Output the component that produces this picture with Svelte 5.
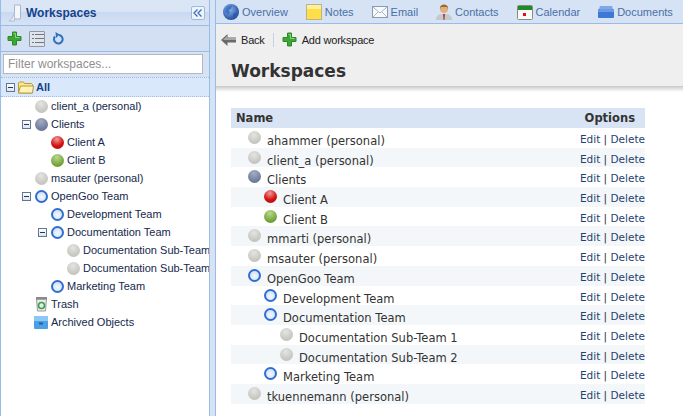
<script>
  const tree = [
    { label: 'client_a (personal)', depth: 1, dot: 'grey' },
    { label: 'Clients', depth: 1, dot: 'slate', open: true },
    { label: 'Client A', depth: 2, dot: 'red' },
    { label: 'Client B', depth: 2, dot: 'green' },
    { label: 'msauter (personal)', depth: 1, dot: 'grey' },
    { label: 'OpenGoo Team', depth: 1, dot: 'ring', open: true },
    { label: 'Development Team', depth: 2, dot: 'ring' },
    { label: 'Documentation Team', depth: 2, dot: 'ring', open: true },
    { label: 'Documentation Sub-Team 1', depth: 3, dot: 'grey' },
    { label: 'Documentation Sub-Team 2', depth: 3, dot: 'grey' },
    { label: 'Marketing Team', depth: 2, dot: 'ring' }
  ];

  const rows = [
    { label: 'ahammer (personal)', depth: 0, dot: 'grey' },
    { label: 'client_a (personal)', depth: 0, dot: 'grey' },
    { label: 'Clients', depth: 0, dot: 'slate' },
    { label: 'Client A', depth: 1, dot: 'red' },
    { label: 'Client B', depth: 1, dot: 'green' },
    { label: 'mmarti (personal)', depth: 0, dot: 'grey' },
    { label: 'msauter (personal)', depth: 0, dot: 'grey' },
    { label: 'OpenGoo Team', depth: 0, dot: 'ring' },
    { label: 'Development Team', depth: 1, dot: 'ring' },
    { label: 'Documentation Team', depth: 1, dot: 'ring' },
    { label: 'Documentation Sub-Team 1', depth: 2, dot: 'grey' },
    { label: 'Documentation Sub-Team 2', depth: 2, dot: 'grey' },
    { label: 'Marketing Team', depth: 1, dot: 'ring' },
    { label: 'tkuennemann (personal)', depth: 0, dot: 'grey' }
  ];

  const tabs = ['Overview', 'Notes', 'Email', 'Contacts', 'Calendar', 'Documents'];
</script>

{#snippet minus()}
  <span class="minus"></span>
{/snippet}

{#snippet plus()}
  <svg width="15" height="15" viewBox="0 0 15 15">
    <path d="M5.500 1h4v4.500h4.500v4h-4.500v4.500h-4v-4.500h-4.500v-4h4.500z" fill="#3fa535" stroke="#2a8a2a" stroke-linejoin="round"/>
    <path d="M6.500 2.500h2v4h4" fill="none" stroke="#86d877"/>
  </svg>
{/snippet}

{#snippet tabIcon(name)}
  {#if name === 'Overview'}
    <svg width="16" height="16" viewBox="0 0 16 16">
      <defs>
        <radialGradient id="globe" cx="0.4" cy="0.35" r="0.7">
          <stop offset="0" stop-color="#8fb6ec"/>
          <stop offset="1" stop-color="#1d4796"/>
        </radialGradient>
      </defs>
      <circle cx="8" cy="8" r="8" fill="url(#globe)"/>
      <path d="M3 4c2-2 4-3 6-2l-1 3-2 1 1 3-2 2-3-3z" fill="#3f76c6"/>
      <path d="M10 10l4-2-1 4-3 2z" fill="#2a5bb0"/>
    </svg>
  {:else if name === 'Notes'}
    <svg width="16" height="16" viewBox="0 0 16 16">
      <rect x="0.500" y="0.500" width="15" height="15" fill="#ffdf45" stroke="#bdb38a"/>
      <rect x="1" y="1" width="14" height="4" fill="#fff09a"/>
    </svg>
  {:else if name === 'Email'}
    <svg width="16" height="12" viewBox="0 0 16 12">
      <rect x="0.500" y="0.500" width="15" height="11" fill="#f7f9fc" stroke="#8d9bb0"/>
      <path d="M1 1l7 6 7-6M1 11l5-5M15 11l-5-5" fill="none" stroke="#aab6c6"/>
    </svg>
  {:else if name === 'Contacts'}
    <svg width="16" height="16" viewBox="0 0 16 16">
      <circle cx="8" cy="5" r="4" fill="#e0b080"/>
      <path d="M4 5c-1-6 9-6 8 0l-1-2H5z" fill="#9a6a2e"/>
      <path d="M0 16c0-5 3-6 8-6s8 1 8 6z" fill="#c4c8d0"/>
      <path d="M7 10h2l-.5 6h-1z" fill="#c0392b"/>
    </svg>
  {:else if name === 'Calendar'}
    <svg width="16" height="16" viewBox="0 0 16 16">
      <rect x="0.500" y="1.500" width="15" height="14" rx="1" fill="#fafafa" stroke="#8a8a7a"/>
      <rect x="1" y="2" width="14" height="4" fill="#1f8a2a"/>
      <rect x="6" y="9" width="3" height="3" fill="#d11"/>
    </svg>
  {:else}
    <svg width="16" height="12" viewBox="0 0 16 12">
      <path d="M2 0h12l1 3H1z" fill="#7fa9e6"/>
      <rect x="0" y="3" width="16" height="9" rx="1" fill="#3f78d4"/>
      <rect x="0" y="3" width="16" height="3" fill="#6a9ae6"/>
    </svg>
  {/if}
{/snippet}

<div class="page">
  <aside class="side">
    <header class="side-title">
      <svg width="14" height="18" viewBox="0 0 14 18">
        <path d="M6.500 1h6v14h-6z" fill="#f4f6fa" stroke="#a9b6c8"/>
        <path d="M1 17c2-1 4-4 5.500-8v8z" fill="#e6ebf2" stroke="#b5c0cf"/>
      </svg>
      <b>Workspaces</b>
      <span class="collapse">
        <svg width="10" height="8" viewBox="0 0 10 8">
          <path d="M4.500 0.500L1 4l3.500 3.500M8.500 0.500L5 4l3.500 3.500" fill="none" stroke="#3f6fb0" stroke-width="1.300"/>
        </svg>
      </span>
    </header>

    <div class="side-tools">
      {@render plus()}
      <span class="list-btn">
        <svg width="13" height="11" viewBox="0 0 13 11">
          <path d="M4 1.500h9M4 5.500h9M4 9.500h9M1 1.500h2M1 5.500h2M1 9.500h2" stroke="#6f7680"/>
        </svg>
      </span>
      <svg width="12" height="13" viewBox="0 0 12 13">
        <path d="M3 4.500a4.300 4.300 0 1 0 4-1.500" fill="none" stroke="#2f6fc0" stroke-width="2"/>
        <path d="M3.500 0l.5 6 3.500-3.500z" fill="#2f6fc0"/>
      </svg>
    </div>

    <div class="filter"><input placeholder="Filter workspaces..." /></div>

    <div class="tree">
      <div class="node all">
        {@render minus()}
        <svg class="folder" width="16" height="13" viewBox="0 0 16 13">
          <path d="M.5 12V2l1-1h4l1 1.500h7l1 1V12z" fill="#ffe88a" stroke="#b89a3a"/>
          <path d="M.5 12l2-7h13l-1 7z" fill="#fff3b8" stroke="#b89a3a"/>
        </svg>
        <b>All</b>
      </div>
      {#each tree as n}
        <div class="node" style="padding-left: {n.depth * 16 + 3}px">
          {#if n.open}{@render minus()}{:else}<span class="gap"></span>{/if}
          <span class="dot {n.dot}"></span>
          <span class="name">{n.label}</span>
        </div>
      {/each}
      <div class="node" style="padding-left: 19px">
        <span class="gap"></span>
        <svg class="tail" width="13" height="16" viewBox="0 0 13 16">
          <path d="M1.500 3h10l-1 12h-8z" fill="#eaeaea" stroke="#9a9a9a"/>
          <rect x="1" y="1" width="11" height="2.500" fill="#8a8a8a"/>
          <circle cx="6.500" cy="9.500" r="3" fill="none" stroke="#3aa04a" stroke-width="1.600"/>
        </svg>
        <span class="name">Trash</span>
      </div>
      <div class="node" style="padding-left: 18px">
        <span class="gap"></span>
        <svg class="tail" width="14" height="13" viewBox="0 0 14 13">
          <rect width="14" height="13" rx="1" fill="#4a9fe6"/>
          <rect width="14" height="5" fill="#8cc8f5"/>
          <rect x="5" y="6.500" width="4" height="2" fill="#1f5f9f"/>
        </svg>
        <span class="name">Archived Objects</span>
      </div>
    </div>
  </aside>

  <main class="main">
    <nav class="tabs">
      {#each tabs as t}
        <span class="tab">{@render tabIcon(t)}{t}</span>
      {/each}
    </nav>

    <div class="head">
      <div class="actions">
        <span class="act">
          <svg width="15" height="12" viewBox="0 0 15 12">
            <path d="M6.500 0v3.500H15v5H6.500V12L0 6z" fill="#6a6a6a"/>
            <path d="M6 2L2 6h13V4H6z" fill="#a8a8a8"/>
          </svg>
          Back
        </span>
        <span class="sep"></span>
        <span class="act">{@render plus()} Add workspace</span>
      </div>
      <h1>Workspaces</h1>
    </div>
    <div class="shadow"></div>

    <div class="table">
      <div class="thead"><span>Name</span><span>Options</span></div>
      {#each rows as r, i}
        <div class="row" class:odd={i % 2 === 1}>
          <span class="cell" style="padding-left: {r.depth * 16 + 17}px">
            <span class="dot {r.dot}"></span>
            <span class="label">{r.label}</span>
          </span>
          <span class="opts"><a href="#e">Edit</a> | <a href="#d">Delete</a></span>
        </div>
      {/each}
    </div>
  </main>
</div>

<style>
  :global(body) {
    margin: 0;
    overflow: hidden;
  }
  .page {
    display: flex;
    width: 683px;
    height: 416px;
    overflow: hidden;
    background: #d6e3f5;
    font-family: "Liberation Sans", Arial, sans-serif;
    font-size: 11px;
    color: #15284b;
  }

  .side {
    width: 208px;
    height: 416px;
    flex: none;
    overflow: hidden;
    border: 1px solid #99bbe8;
    border-top: 0;
    border-bottom: 0;
    background: #fff;
  }
  .side-title {
    display: flex;
    align-items: center;
    gap: 4px;
    height: 25px;
    padding: 0 4px 0 7px;
    border-bottom: 1px solid #99bbe8;
    background: linear-gradient(#dae6f6 0 45%, #c9d9f0 50%, #d6e3f5);
  }
  .side-title b {
    flex: 1;
    font-size: 12px;
    color: #15428b;
  }
  .collapse {
    display: flex;
    align-items: center;
    justify-content: center;
    width: 12px;
    height: 12px;
    border: 1px solid #9db9de;
    border-radius: 2px;
    background: #eef4fc;
  }
  .side-tools {
    display: flex;
    align-items: center;
    gap: 7px;
    height: 25px;
    padding-left: 6px;
    border-bottom: 1px solid #99bbe8;
    background: #d3e0f3;
  }
  .list-btn {
    display: flex;
    align-items: center;
    justify-content: center;
    width: 14px;
    height: 14px;
    border: 1px solid #8f98a5;
    border-radius: 1px;
    background: #e0e5ec;
  }
  .filter {
    height: 25px;
    padding: 2px 6px 0 2px;
    box-sizing: border-box;
    background: #d6e3f5;
  }
  input {
    display: block;
    width: 100%;
    height: 20px;
    box-sizing: border-box;
    padding: 0 4px;
    border: 1px solid #b4b8bd;
    background: #fff;
    font: 12px "Liberation Sans", Arial, sans-serif;
  }
  input::placeholder {
    color: #8f8f8f;
    opacity: 1;
  }
  .tree {
    font-size: 11px;
    white-space: nowrap;
  }
  .node {
    display: flex;
    align-items: center;
    height: 18px;
    color: #15284b;
  }
  .node.all {
    padding-left: 3px;
    border: 1px dotted #a3bae9;
    border-width: 1px 0;
    background: #d9e8fb;
    color: #15428b;
  }
  .folder {
    margin: 0 2px 0 -1px;
  }
  .minus {
    position: relative;
    width: 9px;
    height: 9px;
    margin: 0 4px 0 2px;
    flex: none;
    box-sizing: border-box;
    border: 1px solid #5f7694;
    background: linear-gradient(#fff, #dce4ee);
  }
  .minus::after {
    content: "";
    position: absolute;
    left: 1px;
    right: 1px;
    top: 3px;
    height: 1px;
    background: #26374f;
  }
  .gap {
    width: 15px;
    flex: none;
  }
  .dot {
    display: inline-block;
    width: 13px;
    height: 13px;
    flex: none;
    box-sizing: border-box;
    border-radius: 50%;
  }
  .grey {
    background: radial-gradient(circle at 45% 30%, #e4e4e0, #b7b8b2);
  }
  .slate {
    background: radial-gradient(circle at 45% 25%, #a3adc4, #566486);
  }
  .red {
    background: radial-gradient(circle at 45% 25%, #f29a9a, #d21212 55%, #a50d0d);
  }
  .green {
    background: radial-gradient(circle at 45% 25%, #b9d98e, #6f9f35 70%);
  }
  .ring {
    border: 2px solid #2f6fd0;
    background: radial-gradient(circle at 50% 60%, #f4f8fe, #c8daf5);
  }
  .node .dot {
    margin-right: 3px;
  }
  .tail {
    margin-right: 3px;
    flex: none;
  }

  .main {
    width: 468px;
    height: 416px;
    flex: none;
    margin-left: 5px;
    border-left: 1px solid #99bbe8;
    background: #fff;
  }
  .tabs {
    display: flex;
    align-items: center;
    gap: 18px;
    height: 23px;
    padding-left: 7px;
    border-bottom: 1px solid #99bbe8;
    background: #d6e3f5;
    font-size: 11px;
    color: #4a6fa5;
    white-space: nowrap;
  }
  .tab {
    display: flex;
    align-items: center;
    gap: 3px;
  }
  .head {
    height: 62px;
    background: #efefef;
  }
  .actions {
    display: flex;
    align-items: center;
    gap: 5px;
    height: 31px;
    padding-left: 5px;
    color: #222;
    letter-spacing: -0.2px;
  }
  .act {
    display: flex;
    align-items: center;
    gap: 5px;
  }
  .sep {
    width: 1px;
    height: 14px;
    margin: 0 3px;
    background: #c3d2e6;
  }
  h1 {
    margin: 0;
    padding: 6px 0 0 15px;
    font: bold 17px "DejaVu Sans", Verdana, sans-serif;
    color: #333;
  }
  .shadow {
    height: 6px;
    background: linear-gradient(#c9c9c9, #fff);
  }
  .table {
    width: 414px;
    margin: 16px 0 0 15px;
  }
  .thead {
    display: flex;
    justify-content: space-between;
    align-items: center;
    height: 20px;
    padding: 0 10px 0 5px;
    background: #d8e4f4;
    font: bold 11.500px "DejaVu Sans", Verdana, sans-serif;
    color: #333;
  }
  .row {
    display: flex;
    justify-content: space-between;
    height: 19.700px;
    white-space: nowrap;
  }
  .row.odd {
    background: #f4f7f9;
  }
  .cell {
    display: flex;
    font: 11.500px "DejaVu Sans", Verdana, sans-serif;
    color: #333;
  }
  .cell .dot {
    margin-top: 3px;
    margin-right: 6px;
  }
  .label {
    padding-top: 6px;
  }
  .opts {
    padding-top: 5px;
    font: 10.500px "DejaVu Sans", Verdana, sans-serif;
    color: #333;
  }
  .opts a {
    color: #1f3f6f;
    text-decoration: none;
  }
</style>
